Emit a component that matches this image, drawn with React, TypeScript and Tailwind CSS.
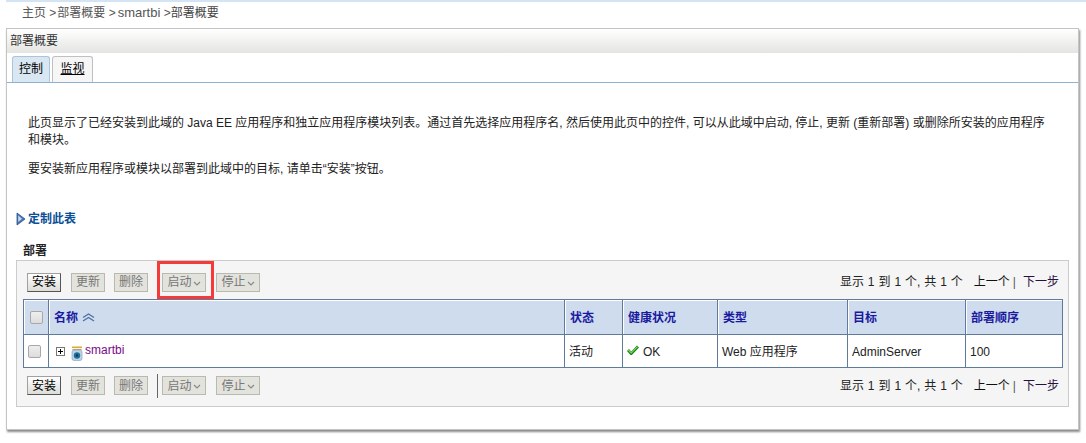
import type { ReactNode } from 'react';

const font = 'font-["Liberation_Sans","Noto_Sans_CJK_SC",sans-serif]';

function Chevron({ className }: { className: string }) {
  return (
    <svg className={className} width="8" height="5" viewBox="0 0 8 5" fill="none" stroke="currentColor" strokeWidth={1.2}>
      <path d="M1 1l3 3 3-3" />
    </svg>
  );
}

function ToolButton({ label, enabled, menu }: { label: string; enabled?: boolean; menu?: boolean }) {
  if (enabled) {
    return (
      <button className="h-[19px] w-[34px] border border-[#a0a0a0] border-b-[#555] border-r-[#555] bg-gradient-to-b from-white to-[#dcdcd8] text-[12px] leading-[16px] text-black">
        {label}
      </button>
    );
  }
  return (
    <button
      className={`flex h-[19px] items-center justify-center gap-[1px] border border-[#b9b9b0] bg-[#e3e3dd] text-[12px] leading-[16px] text-[#777] ${
        menu ? 'w-[44px]' : 'w-[34px]'
      }`}
    >
      {label}
      {menu && <Chevron className="mt-[2px] text-[#888]" />}
    </button>
  );
}

function Toolbar({ divider }: { divider?: boolean }) {
  return (
    <div className="flex items-center">
      <ToolButton label="安装" enabled />
      <div className="ml-[10px]">
        <ToolButton label="更新" />
      </div>
      <div className="ml-[9px]">
        <ToolButton label="删除" />
      </div>
      <div className={`ml-[9px] mr-[4px] h-[24px] w-[1px] ${divider ? 'bg-[#666]' : 'bg-transparent'}`} />
      <ToolButton label="启动" menu />
      <div className="ml-[10px]">
        <ToolButton label="停止" menu />
      </div>
    </div>
  );
}

function Pager() {
  return (
    <div className="flex items-center text-[12px] text-[#222]">
      <span className="[word-spacing:0.6px]">显示 1 到 1 个, 共 1 个</span>
      <span className="ml-[11px] text-[#111]">上一个</span>
      <span className="ml-[3px] text-[#555]">|</span>
      <span className="ml-[7px] text-[#2a1040]">下一步</span>
    </div>
  );
}

function Th({ children, className = '' }: { children: ReactNode; className?: string }) {
  return (
    <th className={`border border-[#5f7a9c] bg-[#cfdcee] shadow-[inset_1px_1px_0_#fff] px-[5px] pt-[1px] text-left text-[12px] font-bold text-[#1a1aa0] ${className}`}>
      {children}
    </th>
  );
}

function Td({ children, className = '' }: { children: ReactNode; className?: string }) {
  return <td className={`border border-[#5f7a9c] bg-white px-[4px] pt-[1px] text-[12px] text-[#222] ${className}`}>{children}</td>;
}

function CheckBox({ className = '' }: { className?: string }) {
  return <div className={`h-[13px] w-[13px] rounded-[2px] border border-[#a8a8a8] bg-gradient-to-b from-[#eee] to-[#ddd] ${className}`} />;
}

function JarIcon() {
  return (
    <svg width="12" height="15" viewBox="0 0 12 15" className="mt-[4px]">
      <rect x="1" y="0.5" width="10" height="1.6" fill="#d9a93a" />
      <rect x="1.5" y="3" width="9" height="1" fill="#c9a050" />
      <rect x="1" y="4" width="10" height="10.5" rx="2" fill="#bcd3e6" stroke="#7d9cb8" strokeWidth={0.6} />
      <circle cx="6" cy="9.5" r="3.2" fill="#1f6f9c" />
      <circle cx="6" cy="9.5" r="1.2" fill="#0a3a5a" />
    </svg>
  );
}

export default function App() {
  return (
    <div className={`h-[443px] w-[1086px] overflow-hidden bg-white ${font}`}>
      <div className="ml-[6px] h-[2px] bg-[#d3e4f5]" />
      <div className="h-[26px] pl-[22px] pt-[1px] text-[12px] leading-[20px] text-[#555]">
        主页 &gt;<span className="ml-[1px]">部署概要</span> &gt;<span className="ml-[2px] text-[13px]">smartbi</span> &gt;<span className="text-[#444]">部署概要</span>
      </div>

      <div className="ml-[6px] h-[402px] w-[1073px] border border-[#c4c4c4] shadow-[1px_2px_2px_#8a8a8a]">
        <div className="h-[24px] bg-gradient-to-b from-white to-[#e4e5e2] pl-[3px] text-[12px] leading-[24px] text-[#333]">部署概要</div>

        <div className="flex h-[30px] items-end gap-[2px] border-b border-[#8fb0cf] pl-[5px]">
          <div className="h-[26px] w-[38px] rounded-t-[3px] border border-b-0 border-[#a9c4dc] bg-[#d9e7f3] text-center text-[12px] leading-[24px] text-black">控制</div>
          <div className="h-[26px] w-[41px] rounded-t-[3px] border border-b-0 border-[#c0c0c0] bg-[#f6f6f6] text-center text-[12px] leading-[24px] text-black underline">监视</div>
        </div>

        <div className="pl-[21px] pr-[22px] pt-[32px] text-[12px] leading-[17px] text-[#222]">
          <p>此页显示了已经安装到此域的 Java EE 应用程序和独立应用程序模块列表。通过首先选择应用程序名, 然后使用此页中的控件, 可以从此域中启动, 停止, 更新 (重新部署) 或删除所安装的应用程序和模块。</p>
          <p className="mt-[12px]">要安装新应用程序或模块以部署到此域中的目标, 请单击“安装”按钮。</p>
        </div>

        <div className="mt-[33px] flex h-[16px] items-center pl-[9px] text-[12px] font-bold text-[#0b4f96]">
          <svg width="10" height="14" viewBox="0 0 10 14" className="mr-[2px]">
            <path d="M1 1l8 6-8 6z" fill="#4a76b8" stroke="#27508c" strokeWidth={0.8} />
            <path d="M2.2 3.4l3.8 3.4-3.8 3.2z" fill="#c8d8ee" />
          </svg>
          定制此表
        </div>

        <div className="mt-[16px] pl-[16px] text-[12px] font-bold leading-[16px] text-[#222]">部署</div>

        <div className="relative ml-[9px] mt-[1px] h-[147px] w-[1053px] border border-[#cbcbcb] bg-[#f5f5f5]">
          <div className="absolute left-[140px] top-[0px] h-[38px] w-[57px] border-[3px] border-[#f53a3a]" />

          <div className="flex h-[38px] items-center justify-between pl-[10px] pr-[9px] pt-[4px]">
            <Toolbar />
            <Pager />
          </div>

          <table className="ml-[6px] w-[1039px] table-fixed border-collapse">
            <colgroup>
              <col className="w-[25px]" />
              <col className="w-[516px]" />
              <col className="w-[58px]" />
              <col className="w-[95px]" />
              <col className="w-[130px]" />
              <col className="w-[118px]" />
              <col className="w-[97px]" />
            </colgroup>
            <thead>
              <tr className="h-[35px]">
                <Th>
                  <CheckBox className="ml-[1px]" />
                </Th>
                <Th>
                  <span className="flex items-center gap-[4px]">
                    名称
                    <svg width="13" height="9" viewBox="0 0 13 9" fill="none" stroke="#4f6f9f" strokeWidth={1.3}>
                      <path d="M1 4.5L6.5 1 12 4.5" />
                      <path d="M1 8L6.5 4.5 12 8" />
                    </svg>
                  </span>
                </Th>
                <Th>状态</Th>
                <Th>健康状况</Th>
                <Th>类型</Th>
                <Th>目标</Th>
                <Th>部署顺序</Th>
              </tr>
            </thead>
            <tbody>
              <tr className="h-[33px]">
                <Td>
                  <CheckBox />
                </Td>
                <Td className="px-[7px]">
                  <span className="flex items-center">
                    <svg width="9" height="9" viewBox="0 0 9 9" className="mr-[6px]">
                      <rect x="0.5" y="0.5" width="8" height="8" fill="#fff" stroke="#777" />
                      <path d="M2 4.5h5M4.5 2v5" stroke="#000" />
                    </svg>
                    <JarIcon />
                    <span className="ml-[2px] -mt-[4px] text-[#7a0a8a]">smartbi</span>
                  </span>
                </Td>
                <Td className="text-[#1a5a9a]">活动</Td>
                <Td>
                  <span className="flex items-center gap-[4px]">
                    <svg width="12" height="10" viewBox="0 0 12 10" className="-mt-[3px]">
                      <path d="M1 5l3.2 3.6L11 1.5" fill="none" stroke="#1f7a1f" strokeWidth={2.8} />
                      <path d="M1.4 5l2.8 3L10.6 1.6" fill="none" stroke="#6fdc4f" strokeWidth={1.2} />
                    </svg>
                    OK
                  </span>
                </Td>
                <Td>Web 应用程序</Td>
                <Td>AdminServer</Td>
                <Td>100</Td>
              </tr>
            </tbody>
          </table>

          <div className="flex h-[35px] items-center justify-between pl-[10px] pr-[9px]">
            <Toolbar divider />
            <Pager />
          </div>
        </div>
      </div>
    </div>
  );
}
